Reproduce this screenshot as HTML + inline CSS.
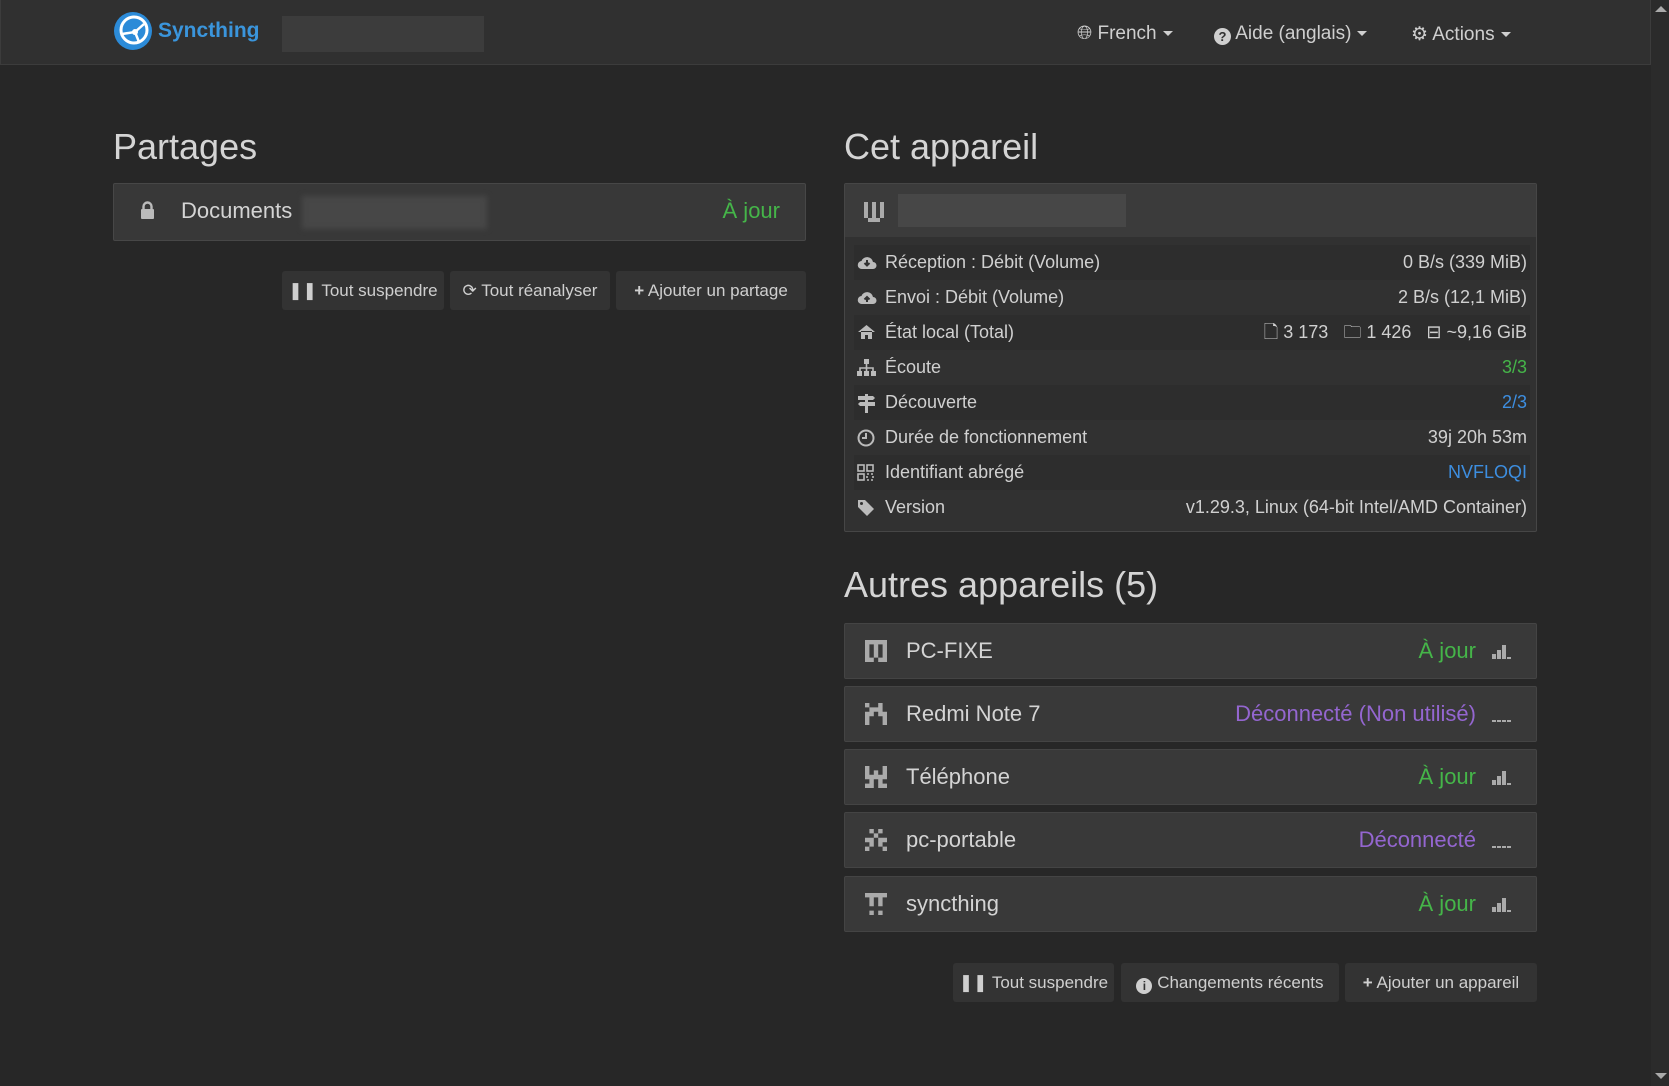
<!DOCTYPE html>
<html><head><meta charset="utf-8"><style>
*{box-sizing:border-box;margin:0;padding:0}
body{width:1669px;height:1086px;background:#272727;font-family:"Liberation Sans",sans-serif;color:#d0d0d0;position:relative;overflow:hidden}
.abs{position:absolute}
.nav{left:0;top:0;width:1651px;height:65px;background:#303030;border:1px solid #3c3c3c;border-top:none}
.sb{left:1651px;top:0;width:18px;height:1086px;background:#2b2b2b}
.navitem{top:23px;font-size:19px;color:#cfcfcf;white-space:nowrap}
.caret{display:inline-block;width:0;height:0;border-left:5px solid transparent;border-right:5px solid transparent;border-top:5px solid #cfcfcf;vertical-align:middle;margin-left:6px}
h2{position:absolute;font-weight:normal;font-size:36px;color:#d4d4d4}
.panel{background:#383838;border:1px solid #474747;border-radius:2px}
.btn{position:absolute;background:#333;border-radius:3px;color:#cfcfcf;font-size:17px;height:39px;line-height:39px;text-align:center;white-space:nowrap}
.row{position:absolute;left:9px;width:676px;height:35px;line-height:35px;font-size:18px;color:#d0d0d0}
.row.d{background:#2d2d2d}
.row .l{position:absolute;left:31px}
.row .r{position:absolute;right:3px}
.row svg{position:absolute;left:3px;top:9px}
.dev{position:absolute;left:844px;width:693px;height:56px;background:#393939;border:1px solid #444;border-radius:2px;font-size:22px}
.dev .n{position:absolute;left:61px;top:14px;color:#d4d4d4}
.dev .s{position:absolute;right:60px;top:14px}
.dev svg.id{position:absolute;left:20px;top:16px}
.dev svg.bar{position:absolute;right:24px;top:21px}
.g{color:#45b549}.p{color:#9466d0}.b{color:#3d8ee0}
</style></head><body>
<div class="abs nav"></div>
<div class="abs sb"><div class="abs" style="left:4px;top:6px;border-left:6px solid transparent;border-right:6px solid transparent;border-bottom:6px solid #aaa"></div><div class="abs" style="left:4px;top:1073px;border-left:6px solid transparent;border-right:6px solid transparent;border-top:6px solid #aaa"></div></div>
<svg class="abs" style="left:113px;top:11px" width="40" height="40" viewBox="0 0 40 40"><circle cx="20" cy="20" r="19" fill="#2c8bd8"/><circle cx="21" cy="19" r="13" fill="none" stroke="#fff" stroke-width="3"/><path d="M9 23 L22 21 L31 13 M22 21 L26 31" stroke="#fff" stroke-width="2.5" fill="none"/><circle cx="22" cy="21" r="3" fill="#fff"/></svg>
<div class="abs" style="left:158px;top:19px;font-size:21px;font-weight:bold;color:#3a95dc">Syncthing</div>
<div class="abs" style="left:282px;top:16px;width:202px;height:36px;background:#3c3c3c"></div>
<div class="abs navitem" style="left:1077px">&#127760;&#xFE0E; French<span class="caret"></span></div>
<div class="abs navitem" style="left:1214px"><span style="display:inline-block;width:17px;height:17px;border-radius:50%;background:#cfcfcf;color:#303030;font-size:13px;text-align:center;line-height:17px;font-weight:bold;vertical-align:-2px">?</span> Aide (anglais)<span class="caret"></span></div>
<div class="abs navitem" style="left:1411px">&#9881; Actions<span class="caret"></span></div>

<h2 style="left:113px;top:126px">Partages</h2>
<div class="abs panel" style="left:113px;top:183px;width:693px;height:58px"></div>
<svg class="abs" style="left:140px;top:201px" width="15" height="19" viewBox="0 0 15 19"><path d="M3.5 8V5.5a4 4 0 0 1 8 0V8" stroke="#bbb" stroke-width="2.4" fill="none"/><rect x="1" y="8" width="13" height="10" rx="1" fill="#bbb"/></svg>
<div class="abs" style="left:181px;top:198px;font-size:22px;color:#d4d4d4">Documents</div>
<div class="abs" style="left:302px;top:196px;width:185px;height:33px;background:#474747;filter:blur(3px)"></div>
<div class="abs g" style="right:889px;top:198px;font-size:22px">À jour</div>
<div class="btn" style="left:282px;top:271px;width:162px">❚❚ Tout suspendre</div>
<div class="btn" style="left:450px;top:271px;width:160px">⟳ Tout réanalyser</div>
<div class="btn" style="left:616px;top:271px;width:190px"><b>+</b> Ajouter un partage</div>

<h2 style="left:844px;top:126px">Cet appareil</h2>
<div class="abs" style="left:844px;top:183px;width:693px;height:349px;background:#313131;border:1px solid #464646;border-radius:2px">
<div class="abs" style="left:0;top:0;width:691px;height:53px;background:#3b3b3b"></div>
<svg class="abs" style="left:19px;top:18px" width="20" height="22" viewBox="0 0 5 5.5" fill="#aaa"><rect x="0" y="0" width="1" height="4"/><rect x="2" y="0" width="1" height="4"/><rect x="4" y="0" width="1" height="4"/><rect x="1" y="4" width="3" height="1"/></svg>
<div class="abs" style="left:53px;top:10px;width:228px;height:33px;background:#474747"></div>
<div style="position:absolute;left:0;top:61px">
<div class="row d" style="top:0"><svg width="20" height="16" viewBox="0 0 20 16"><path d="M5 15a4 4 0 0 1-.5-8 6 6 0 0 1 11.5 1 3.5 3.5 0 0 1 0 7z" fill="#bbb"/><path d="M10 6v5M7.5 9l2.5 2.5L12.5 9" stroke="#313131" stroke-width="2" fill="none"/></svg><span class="l">Réception : Débit (Volume)</span><span class="r">0 B/s (339 MiB)</span></div>
<div class="row" style="top:35px"><svg width="20" height="16" viewBox="0 0 20 16"><path d="M5 15a4 4 0 0 1-.5-8 6 6 0 0 1 11.5 1 3.5 3.5 0 0 1 0 7z" fill="#bbb"/><path d="M10 13V8M7.5 10.5L10 8l2.5 2.5" stroke="#313131" stroke-width="2" fill="none"/></svg><span class="l">Envoi : Débit (Volume)</span><span class="r">2 B/s (12,1 MiB)</span></div>
<div class="row d" style="top:70px"><svg width="19" height="16" viewBox="0 0 19 16"><path d="M1 8L9.5 1 18 8M4 7v8h4v-4h3v4h4V7" fill="#bbb"/></svg><span class="l">État local (Total)</span><span class="r">🗋 3 173 &nbsp;&nbsp;🗀 1 426 &nbsp;&nbsp;⊟ ~9,16 GiB</span></div>
<div class="row" style="top:105px"><svg width="19" height="17" viewBox="0 0 19 17"><rect x="7" y="0" width="5" height="5" fill="#bbb"/><path d="M9.5 5v4M3 12V9h13v3M9.5 9v3" stroke="#bbb" stroke-width="1.6" fill="none"/><rect x="0" y="12" width="5" height="5" fill="#bbb"/><rect x="7" y="12" width="5" height="5" fill="#bbb"/><rect x="14" y="12" width="5" height="5" fill="#bbb"/></svg><span class="l">Écoute</span><span class="r g">3/3</span></div>
<div class="row d" style="top:140px"><svg width="19" height="19" viewBox="0 0 19 19"><rect x="8" y="0" width="3" height="19" fill="#bbb"/><path d="M1 2h15l2 2-2 2H1zM3 8h15v4H3l-2-2z" fill="#bbb"/></svg><span class="l">Découverte</span><span class="r b">2/3</span></div>
<div class="row" style="top:175px"><svg width="18" height="18" viewBox="0 0 18 18"><circle cx="9" cy="9" r="7.5" stroke="#bbb" stroke-width="2" fill="none"/><path d="M9 4v5H5" stroke="#bbb" stroke-width="2" fill="none"/></svg><span class="l">Durée de fonctionnement</span><span class="r">39j 20h 53m</span></div>
<div class="row d" style="top:210px"><svg width="17" height="17" viewBox="0 0 17 17" fill="none" stroke="#bbb" stroke-width="1.6"><rect x="1" y="1" width="6" height="6"/><rect x="10" y="1" width="6" height="6"/><rect x="1" y="10" width="6" height="6"/><path d="M10 10h6v6h-6z" stroke-dasharray="2 2"/></svg><span class="l">Identifiant abrégé</span><span class="r b">NVFLOQI</span></div>
<div class="row" style="top:245px"><svg width="18" height="18" viewBox="0 0 18 18"><path d="M1 1h7l9 9-7 7-9-9z" fill="#bbb"/><circle cx="4.5" cy="4.5" r="1.5" fill="#313131"/></svg><span class="l">Version</span><span class="r">v1.29.3, Linux (64-bit Intel/AMD Container)</span></div>
</div></div>

<h2 style="left:844px;top:564px">Autres appareils (5)</h2>

<div class="dev" style="top:623px"><svg class="id" width="22" height="22" viewBox="0 0 5 5" fill="#aaa"><path d="M0 0h5v1H0zM0 1h1v4H0zM2 1h1v3H2zM4 1h1v4H4zM1 4h1v1H1zM3 4h1v1H3z"/></svg><span class="n">PC-FIXE</span><span class="s g">À jour</span><svg class="bar" width="20" height="14" viewBox="0 0 20 14" fill="#aaa"><rect x="0" y="9" width="4" height="5"/><rect x="5" y="5" width="4" height="9"/><rect x="10" y="0" width="4" height="14"/><rect x="15" y="12" width="4" height="2"/></svg></div>
<div class="dev" style="top:686px"><svg class="id" width="22" height="22" viewBox="0 0 5 5" fill="#aaa"><path d="M0 0h1v1H0zM3 0h1v1H3zM1 1h3v1H1zM0 2h1v3H0zM4 2h1v3H4zM1 2h1v1H1zM3 2h1v1H3z"/></svg><span class="n">Redmi Note 7</span><span class="s p">Déconnecté (Non utilisé)</span><svg class="bar" width="20" height="14" viewBox="0 0 20 14" fill="#aaa"><rect x="0" y="12" width="4" height="2"/><rect x="5" y="12" width="4" height="2"/><rect x="10" y="12" width="4" height="2"/><rect x="15" y="12" width="4" height="2"/></svg></div>
<div class="dev" style="top:749px"><svg class="id" width="22" height="22" viewBox="0 0 5 5" fill="#aaa"><path d="M0 0h1v2H0zM4 0h1v2H4zM2 1h1v1H2zM0 2h5v1H0zM1 3h1v1H1zM3 3h1v1H3zM0 4h2v1H0zM3 4h2v1H3z"/></svg><span class="n">Téléphone</span><span class="s g">À jour</span><svg class="bar" width="20" height="14" viewBox="0 0 20 14" fill="#aaa"><rect x="0" y="9" width="4" height="5"/><rect x="5" y="5" width="4" height="9"/><rect x="10" y="0" width="4" height="14"/><rect x="15" y="12" width="4" height="2"/></svg></div>
<div class="dev" style="top:812px"><svg class="id" width="22" height="22" viewBox="0 0 5 5" fill="#aaa"><path d="M1 0h1v1H1zM3 0h1v1H3zM2 1h1v1H2zM0 2h2v1H0zM3 2h2v1H3zM1 3h1v1H1zM3 3h1v1H3zM0 4h1v1H0zM4 4h1v1H4z"/></svg><span class="n">pc-portable</span><span class="s p">Déconnecté</span><svg class="bar" width="20" height="14" viewBox="0 0 20 14" fill="#aaa"><rect x="0" y="12" width="4" height="2"/><rect x="5" y="12" width="4" height="2"/><rect x="10" y="12" width="4" height="2"/><rect x="15" y="12" width="4" height="2"/></svg></div>
<div class="dev" style="top:876px"><svg class="id" width="22" height="22" viewBox="0 0 5 5" fill="#aaa"><path d="M0 0h5v1H0zM1 1h1v2H1zM3 1h1v2H3zM1 4h1v1H1zM3 4h1v1H3z"/></svg><span class="n">syncthing</span><span class="s g">À jour</span><svg class="bar" width="20" height="14" viewBox="0 0 20 14" fill="#aaa"><rect x="0" y="9" width="4" height="5"/><rect x="5" y="5" width="4" height="9"/><rect x="10" y="0" width="4" height="14"/><rect x="15" y="12" width="4" height="2"/></svg></div>

<div class="btn" style="left:953px;top:963px;width:161px">❚❚ Tout suspendre</div>
<div class="btn" style="left:1121px;top:963px;width:218px"><span style="display:inline-block;width:16px;height:16px;border-radius:50%;background:#cfcfcf;color:#333;font-size:12px;line-height:16px;font-weight:bold;vertical-align:-2px">i</span> Changements récents</div>
<div class="btn" style="left:1345px;top:963px;width:192px"><b>+</b> Ajouter un appareil</div>
</body></html>
